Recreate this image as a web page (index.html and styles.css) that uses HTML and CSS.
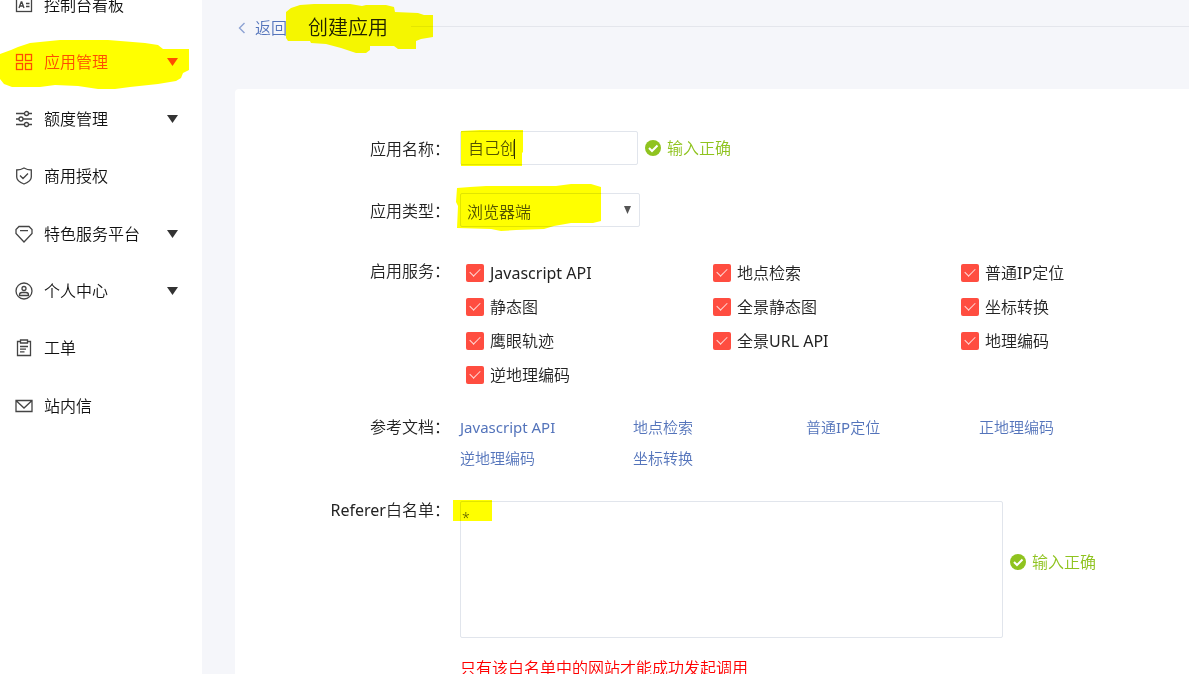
FILE: index.html
```html
<!DOCTYPE html>
<html lang="zh-CN">
<head>
<meta charset="utf-8">
<title>创建应用</title>
<link rel="stylesheet" href="styles.css">
</head>
<body>
<div class="layout">
  <nav class="sidebar">
    <a class="nav-item" href="#"><svg class="nav-icon" viewBox="0 0 18 18"><rect x="1.500" y="2.500" width="15" height="13"/><path d="M4 12l2.200-6h.6L9 12M4.800 10h3.400M11 7.500h3.500M11 10.500h3.500"/></svg><span>控制台看板</span></a>
    <a class="nav-item nav-item--active" href="#"><svg class="nav-icon" viewBox="0 0 18 18"><rect x="1.500" y="1.500" width="6" height="6"/><rect x="10.500" y="1.500" width="6" height="6"/><rect x="1.500" y="10.500" width="6" height="6"/><rect x="10.500" y="10.500" width="6" height="6"/></svg><span>应用管理</span><svg class="nav-arrow" viewBox="0 0 11 8"><path d="M0 0h11L5.500 8z"/></svg>
      <svg class="mark mark--nav" viewBox="0 0 190 50"><path d="M0 14L11 10 18 7 30 3 60 0H108L145 3 158 5 163 9H189V30L183 33 181 38 176 41 158 44 130 47 115 49H98L78 46 55 45 40 47H12L4 44 0 39z"/></svg></a>
    <a class="nav-item" href="#"><svg class="nav-icon" viewBox="0 0 18 18"><path d="M1 3.500h8.500M13.500 3.500H17M1 9h3M8 9h9M1 14.500h8.500M13.500 14.500H17"/><circle cx="11.500" cy="3.500" r="2"/><circle cx="6" cy="9" r="2"/><circle cx="11.500" cy="14.500" r="2"/></svg><span>额度管理</span><svg class="nav-arrow" viewBox="0 0 11 8"><path d="M0 0h11L5.500 8z"/></svg></a>
    <a class="nav-item nav-item--leaf" href="#"><svg class="nav-icon" viewBox="0 0 18 18"><path d="M9 1C6.500 2.500 4 3 1.700 3v7C1.700 13.500 5 15.500 9 17c4-1.500 7.300-3.500 7.300-7V3C14 3 11.500 2.500 9 1zM5 8.500l3 3L13 6.500"/></svg><span>商用授权</span></a>
    <a class="nav-item" href="#"><svg class="nav-icon" viewBox="0 0 18 18"><path d="M4 1.500h10l3 3v4L9 17 1 8.500v-4zM5 5.700h8"/></svg><span>特色服务平台</span><svg class="nav-arrow" viewBox="0 0 11 8"><path d="M0 0h11L5.500 8z"/></svg></a>
    <a class="nav-item" href="#"><svg class="nav-icon" viewBox="0 0 18 18"><circle cx="9" cy="9" r="8"/><circle cx="9" cy="6.500" r="2"/><path d="M4.500 13.500V13a2.500 2.500 0 0 1 2.500-2.500h4a2.500 2.500 0 0 1 2.500 2.500v.5z"/></svg><span>个人中心</span><svg class="nav-arrow" viewBox="0 0 11 8"><path d="M0 0h11L5.500 8z"/></svg></a>
    <a class="nav-item nav-item--leaf" href="#"><svg class="nav-icon" viewBox="0 0 18 18"><path d="M5.500 2.500h-3v14h13v-14h-3M5.500 1h7v3h-7zM5 7.500h8M5 10.200h6M5 12.900h4.500"/></svg><span>工单</span></a>
    <a class="nav-item nav-item--leaf" href="#"><svg class="nav-icon" viewBox="0 0 18 18"><path d="M1 3.500h16v11H1zM1.500 4L9 11l7.500-7"/></svg><span>站内信</span></a>
  </nav>
  <main class="main">
    <header class="page-head">
      <a class="back" href="#"><svg class="back-icon" viewBox="0 0 8 12"><path d="M6.500 1L1.500 6l5 5"/></svg>返回</a>
      <h1 class="title">创建应用</h1>
      <div class="rule"></div>
      <svg class="mark mark--title" viewBox="0 0 148 50"><path d="M0 8L5 4 14 1 28 0H64L76 2 80 1H100L108 3 109 8 132 9 138 11H147V33L135 35 130 37V45H112L108 42H84V46L80 49H70L55 44 40 40 25 39 24 37H2L0 34z"/></svg>
    </header>
    <form class="card">
      <div class="row row--field">
        <label class="label" for="app-name">应用名称：</label>
        <div class="control">
          <div class="box box--name"><input class="field" id="app-name" type="text" value="自己创"><span class="caret"></span>
            <svg class="mark mark--name" viewBox="0 0 64 37"><path d="M1 1L20 0H63V22L62 23V36H1z"/></svg></div>
          <span class="ok"><svg class="ok-icon" viewBox="0 0 16 16"><circle cx="8" cy="8" r="8"/><path d="M4 8l3 3 5.500-5.500"/></svg>输入正确</span>
        </div>
      </div>
      <div class="row row--field">
        <label class="label" for="app-type">应用类型：</label>
        <div class="control">
          <div class="box box--type"><select class="field field--select" id="app-type"><option>浏览器端</option></select><svg class="select-arrow" viewBox="0 0 7 8"><path d="M0 0h7L3.500 8z"/></svg>
            <svg class="mark mark--type" viewBox="0 0 147 47"><path d="M1 4L14 3 30 2H100L115 0H135L145 3V37L137 39H115L98 42 88 45 60 46 45 47 35 45 1 44 2 22 0 18z"/></svg></div>
        </div>
      </div>
      <div class="row row--services">
        <span class="label" id="services">启用服务：</span>
        <div class="services" role="group" aria-labelledby="services">
          <label class="check"><input class="tick" type="checkbox" checked><span class="latin">Javascript API</span></label>
          <label class="check"><input class="tick" type="checkbox" checked>地点检索</label>
          <label class="check"><input class="tick" type="checkbox" checked><span>普通<span class="latin">IP</span>定位</span></label>
          <label class="check"><input class="tick" type="checkbox" checked>静态图</label>
          <label class="check"><input class="tick" type="checkbox" checked>全景静态图</label>
          <label class="check"><input class="tick" type="checkbox" checked>坐标转换</label>
          <label class="check"><input class="tick" type="checkbox" checked>鹰眼轨迹</label>
          <label class="check"><input class="tick" type="checkbox" checked><span>全景<span class="latin">URL API</span></span></label>
          <label class="check"><input class="tick" type="checkbox" checked>地理编码</label>
          <label class="check"><input class="tick" type="checkbox" checked>逆地理编码</label>
        </div>
      </div>
      <div class="row row--docs">
        <span class="label">参考文档：</span>
        <div class="docs">
          <a class="latin" href="#">Javascript API</a><a href="#">地点检索</a><a href="#">普通<span class="latin">IP</span>定位</a><a href="#">正地理编码</a>
          <a href="#">逆地理编码</a><a href="#">坐标转换</a>
        </div>
      </div>
      <div class="row row--referer">
        <label class="label" for="referer"><span class="latin">Referer</span>白名单：</label>
        <div class="referer">
          <div class="control">
            <div class="box box--area"><textarea class="field field--area" id="referer">*</textarea>
              <svg class="mark mark--area" viewBox="0 0 39 21"><path d="M0 0H39V21H0z"/></svg></div>
            <span class="ok ok--area"><svg class="ok-icon" viewBox="0 0 16 16"><circle cx="8" cy="8" r="8"/><path d="M4 8l3 3 5.500-5.500"/></svg>输入正确</span>
          </div>
          <p class="warn">只有该白名单中的网站才能成功发起调用</p>
        </div>
      </div>
    </form>
  </main>
</div>
</body>
</html>
```

FILE: styles.css
```css
* { box-sizing: border-box; }

body {
  margin: 0;
  height: 100vh;
  overflow: hidden;
  color: #222;
  font: 350 16px/24px "Noto Sans", "Noto Sans CJK SC", sans-serif;
}

a { color: #5474bb; text-decoration: none; }

.latin { font-weight: 400; }

.layout { display: flex; min-height: 100vh; background: #f5f6fa; }

/* Sidebar */
.sidebar {
  flex: 0 0 202px;
  margin-top: -24px;
  background: #fff;
}
.nav-item {
  position: relative;
  display: flex;
  align-items: center;
  gap: 11px;
  height: 57px;
  padding: 0 24px 0 15px;
  color: #111;
}
.nav-item--leaf { height: 58px; }
.nav-item--active { color: #ff4d40; }
.nav-icon {
  width: 18px;
  height: 18px;
  fill: none;
  stroke: #444;
  stroke-width: 1.3;
}
.nav-item--active .nav-icon { stroke: currentColor; }
.nav-arrow { width: 11px; height: 8px; margin-left: auto; fill: #333; }
.nav-item--active .nav-arrow { fill: currentColor; }

/* Highlighter strokes laid over the content */
.mark {
  position: absolute;
  fill: #ff0;
  mix-blend-mode: multiply;
  pointer-events: none;
}
.mark--nav { left: 0; top: 7px; width: 190px; height: 50px; }
.mark--title { left: 84px; top: 4px; width: 148px; height: 50px; }
.mark--name { left: 0; top: -1px; width: 64px; height: 37px; }
.mark--type { left: -4px; top: -9px; width: 147px; height: 47px; }
.mark--area { left: -7px; top: -1px; width: 39px; height: 21px; }

/* Page header */
.main { flex: 1; min-width: 0; display: flex; flex-direction: column; }
.page-head {
  position: relative;
  display: flex;
  align-items: center;
  height: 89px;
  padding: 0 0 33px 36px;
}
.back { display: flex; align-items: center; gap: 9px; }
.back-icon { width: 8px; height: 12px; fill: none; stroke: #8ea3d3; stroke-width: 1.4; }
.title { margin: 0 23px 0 21px; font-size: 20px; font-weight: 350; line-height: 24px; }
.rule { flex: 1; height: 1px; margin-bottom: 4px; background: #e4e6ec; }

/* Form card */
.card {
  flex: 1;
  margin-left: 33px;
  padding-top: 42px;
  border-radius: 4px 0 0 0;
  background: #fff;
}
.row { display: grid; grid-template-columns: 215px 1fr; gap: 10px; }
.row--field { margin-bottom: 28px; line-height: 36px; }
.row--field .control { height: 34px; }
.row--services { margin-bottom: 28px; padding-top: 4px; }
.row--docs { margin-bottom: 28px; }
.label { text-align: right; white-space: nowrap; }
.row--field .label { height: 34px; }
.control { display: flex; align-items: center; gap: 7px; }
.referer { padding-top: 3px; }
.box { position: relative; }
.box--name { width: 178px; }
.box--type { width: 180px; }
.box--area { width: 543px; }
.field {
  display: block;
  width: 100%;
  height: 34px;
  padding: 0 7px;
  border: 1px solid #e1e5ec;
  border-radius: 2px;
  outline: 0;
  background: #fff;
  color: #555;
  font: inherit;
}
.field--select { appearance: none; padding: 0 6px; }
.field--area {
  height: 137px;
  padding: 4px 1px;
  resize: none;
  font-size: 14px;
  line-height: 24px;
}
.caret { position: absolute; left: 54px; top: 8px; width: 1px; height: 20px; background: #333; }
.select-arrow { position: absolute; right: 9px; top: 13px; width: 7px; height: 8px; fill: #555; }
.ok { display: flex; align-items: center; gap: 6px; color: #8fc31f; line-height: 24px; white-space: nowrap; }
.ok--area { padding-bottom: 16px; }
.ok-icon { width: 16px; height: 16px; fill: #8fc31f; }
.ok-icon path { fill: none; stroke: #fff; stroke-width: 2; }

.services {
  display: grid;
  grid-template-columns: 247px 248px auto;
  row-gap: 10px;
  padding: 2px 0 0 6px;
}
.check { display: flex; align-items: center; gap: 6px; white-space: nowrap; }
.tick {
  display: grid;
  place-items: center;
  appearance: none;
  width: 18px;
  height: 18px;
  margin: 0;
  border-radius: 2px;
  background: #ff4d40;
}
.tick::before {
  content: "";
  width: 9px;
  height: 5px;
  margin-bottom: 4px;
  border: solid #ffd9d6;
  border-width: 0 0 1px 1px;
  transform: rotate(-45deg);
}

.docs {
  display: grid;
  grid-template-columns: repeat(3, 173px) auto;
  row-gap: 7px;
  font-size: 15px;
}
.warn { margin: 18px 0 0; color: #f00; }
```
